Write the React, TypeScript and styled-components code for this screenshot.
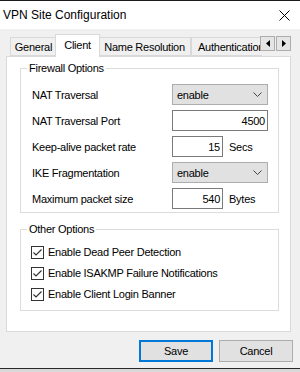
import React from 'react'
import styled, { createGlobalStyle } from 'styled-components'

const GlobalStyle = createGlobalStyle`
  html, body {
    margin: 0;
    padding: 0;
    background: #d6d6d6;
  }
  body {
    font-family: 'Liberation Sans', Arial, sans-serif;
    color: #000;
  }
`

const Window = styled.div`
  width: 300px;
  height: 372px;
  display: flex;
  flex-direction: column;
  overflow: hidden;
`

const DesktopEdge = styled.div`
  flex: none;
  height: 1px;
  background: #1b1b1b;
`

const TitleBar = styled.div`
  flex: none;
  height: 28px;
  display: flex;
  align-items: center;
  justify-content: space-between;
  padding: 0 10px 0 3px;
  background: #fff;
  font-size: 12px;
`

const Body = styled.div`
  flex: 1;
  display: flex;
  flex-direction: column;
  padding: 5px 0 0 6px;
  background: #f0f0f0;
  font-size: 11px;
  letter-spacing: -0.25px;
`

const BottomEdge = styled.div`
  flex: none;
  height: 1px;
  background: #2a2a2a;
`

const Desktop = styled.div`
  flex: none;
  height: 3px;
  background: #d9d9d9;
`

const TabRow = styled.div`
  flex: none;
  height: 23px;
  display: flex;
  margin-right: 9px;
  margin-bottom: -1px;
  position: relative;
  z-index: 1;
`

const TabList = styled.div`
  flex: 1;
  display: flex;
  align-items: flex-start;
  overflow: hidden;
  padding-left: 4px;
`

const Tab = styled.div<{ $active?: boolean; $w?: number }>`
  flex: none;
  box-sizing: border-box;
  ${({ $w }) => ($w ? `width: ${$w}px;` : 'padding: 0 6px;')}
  height: ${({ $active }) => ($active ? 23 : 19)}px;
  margin-top: ${({ $active }) => ($active ? 0 : 3)}px;
  margin-left: ${({ $active }) => ($active ? -2 : 0)}px;
  margin-right: ${({ $active }) => ($active ? -2 : 0)}px;
  display: flex;
  align-items: center;
  justify-content: center;
  padding-bottom: ${({ $active }) => ($active ? 3 : 0)}px;
  border: 1px solid #d9d9d9;
  border-bottom: ${({ $active }) => ($active ? 'none' : '1px solid #d9d9d9')};
  background: ${({ $active }) => ($active ? '#fff' : '#f0f0f0')};
  position: relative;
  z-index: ${({ $active }) => ($active ? 2 : 1)};
  white-space: nowrap;
`

const Arrows = styled.div`
  flex: none;
  display: flex;
  gap: 1px;
  margin-top: 2px;
  margin-left: -2px;
  position: relative;
  z-index: 3;
`

const ArrowButton = styled.div`
  width: 15px;
  height: 15px;
  box-sizing: border-box;
  border: 1px solid #adadad;
  background: #e5e5e5;
  display: flex;
  align-items: center;
  justify-content: center;
`

const Panel = styled.div`
  flex: none;
  width: 285px;
  height: 276px;
  box-sizing: border-box;
  border: 1px solid #d9d9d9;
  background: #fff;
  padding: 5px 11px 0 13px;
  display: flex;
  flex-direction: column;
  gap: 10px;
`

const Group = styled.fieldset`
  margin: 0;
  padding: 0;
  border: 1px solid #dcdcdc;
  min-width: 0;
`

const Legend = styled.legend`
  margin-left: 6px;
  padding: 0 2px;
  line-height: 13px;
`

const FieldGrid = styled.div`
  display: grid;
  grid-template-columns: 140px auto;
  grid-auto-rows: 21px;
  row-gap: 5px;
  align-items: center;
  padding: 9px 0 3px 11px;
`

const Control = styled.div`
  display: flex;
  align-items: center;
`

const Select = styled.div`
  width: 96px;
  height: 21px;
  box-sizing: border-box;
  border: 1px solid #adadad;
  background: #e1e1e1;
  display: flex;
  align-items: center;
  justify-content: space-between;
  padding: 0 5px 0 4px;
`

const Input = styled.div<{ $w: number }>`
  width: ${({ $w }) => $w}px;
  height: 21px;
  box-sizing: border-box;
  border: 1px solid #7a7a7a;
  background: #fff;
  display: flex;
  align-items: center;
  justify-content: flex-end;
  padding-right: 2px;
`

const Unit = styled.span`
  margin-left: 6px;
`

const CheckList = styled.div`
  display: flex;
  flex-direction: column;
  gap: 1px;
  padding: 6px 0 6px 10px;
`

const CheckRow = styled.label`
  height: 20px;
  display: flex;
  align-items: center;
  gap: 4px;
`

const Box = styled.span`
  width: 13px;
  height: 13px;
  box-sizing: border-box;
  border: 1px solid #333;
  background: #fff;
  display: flex;
`

const ButtonRow = styled.div`
  flex: none;
  display: flex;
  justify-content: flex-end;
  gap: 6px;
  margin-top: 8px;
  padding-right: 7px;
`

const Button = styled.div<{ $default?: boolean }>`
  width: 74px;
  height: 22px;
  box-sizing: border-box;
  border: ${({ $default }) => ($default ? '2px solid #0078d7' : '1px solid #adadad')};
  background: #e1e1e1;
  display: flex;
  align-items: center;
  justify-content: center;
  font-size: 11px;
`

const Chevron = () => (
  <svg width="9" height="5" viewBox="0 0 9 5">
    <path d="M0.5 0.5 L4.5 4.5 L8.5 0.5" fill="none" stroke="#444" strokeWidth="1" />
  </svg>
)

const Check = () => (
  <svg width="11" height="11" viewBox="0 0 11 11">
    <path d="M1.5 5.5 L4 8 L9.5 2.5" fill="none" stroke="#333" strokeWidth="1.2" />
  </svg>
)

const Close = () => (
  <svg width="11" height="11" viewBox="0 0 11 11">
    <path d="M0.5 0.5 L10.5 10.5 M10.5 0.5 L0.5 10.5" stroke="#000" strokeWidth="1" />
  </svg>
)

const Triangle = ({ dir }: { dir: 'left' | 'right' }) => (
  <svg width="4" height="7" viewBox="0 0 4 7">
    <path d={dir === 'left' ? 'M4 0 L0 3.5 L4 7 Z' : 'M0 0 L4 3.5 L0 7 Z'} fill="#000" />
  </svg>
)

const checks = [
  'Enable Dead Peer Detection',
  'Enable ISAKMP Failure Notifications',
  'Enable Client Login Banner',
]

export default function App() {
  return (
    <Window>
      <GlobalStyle />
      <DesktopEdge />
      <TitleBar>
        <span>VPN Site Configuration</span>
        <Close />
      </TitleBar>
      <Body>
        <TabRow>
          <TabList>
            <Tab $w={47}>General</Tab>
            <Tab $active $w={45}>Client</Tab>
            <Tab $w={93}>Name Resolution</Tab>
            <Tab>Authentication</Tab>
          </TabList>
          <Arrows>
            <ArrowButton><Triangle dir="left" /></ArrowButton>
            <ArrowButton><Triangle dir="right" /></ArrowButton>
          </Arrows>
        </TabRow>
        <Panel>
          <Group>
            <Legend>Firewall Options</Legend>
            <FieldGrid>
              <span>NAT Traversal</span>
              <Control>
                <Select>enable<Chevron /></Select>
              </Control>
              <span>NAT Traversal Port</span>
              <Control>
                <Input $w={96}>4500</Input>
              </Control>
              <span>Keep-alive packet rate</span>
              <Control>
                <Input $w={51}>15</Input>
                <Unit>Secs</Unit>
              </Control>
              <span>IKE Fragmentation</span>
              <Control>
                <Select>enable<Chevron /></Select>
              </Control>
              <span>Maximum packet size</span>
              <Control>
                <Input $w={51}>540</Input>
                <Unit>Bytes</Unit>
              </Control>
            </FieldGrid>
          </Group>
          <Group>
            <Legend>Other Options</Legend>
            <CheckList>
              {checks.map((c) => (
                <CheckRow key={c}>
                  <Box><Check /></Box>
                  {c}
                </CheckRow>
              ))}
            </CheckList>
          </Group>
        </Panel>
        <ButtonRow>
          <Button $default>Save</Button>
          <Button>Cancel</Button>
        </ButtonRow>
      </Body>
      <BottomEdge />
      <Desktop />
    </Window>
  )
}
